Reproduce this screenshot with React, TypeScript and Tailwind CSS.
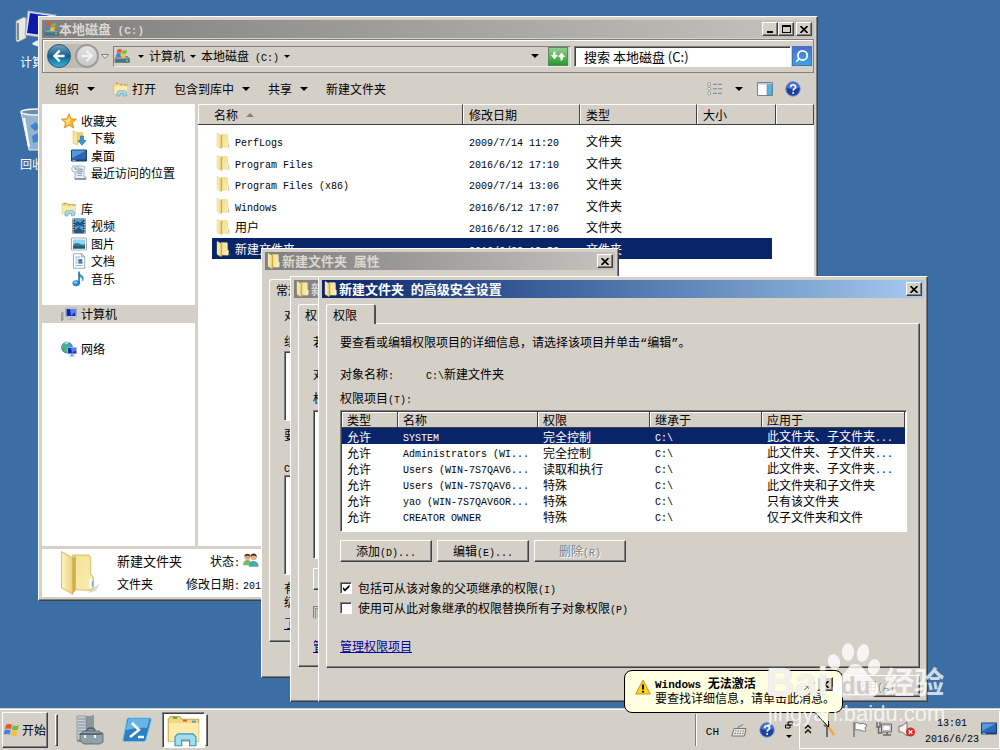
import React from 'react';
import { Search, ArrowLeft, ArrowRight } from 'lucide-react';

const raised = 'border border-t-white border-l-white border-r-[#404040] border-b-[#404040] shadow-[inset_-1px_-1px_0_#808080]';
const sunken = 'border border-t-[#808080] border-l-[#808080] border-r-white border-b-white shadow-[inset_1px_1px_0_#404040]';

// Latin runs are set in a half-width face, two steps smaller than the Chinese text
const Txt: React.FC<{ s: string; big?: boolean }> = ({ s, big }) => (
  <span className="whitespace-pre">
    {s.split(/([\x20-\x7e]+)/).map((part, i) =>
      i % 2 ? (
        <span key={i} className={`leading-none font-['Liberation_Mono','Noto_Sans_CJK_SC',monospace] ${big ? 'text-[11px]' : 'text-[10px]'}`}>
          {part}
        </span>
      ) : (
        part
      )
    )}
  </span>
);

const Caret = () => (
  <svg viewBox="0 0 8 4" className="w-2 h-1 shrink-0">
    <path d="M0 0h8L4 4z" fill="#000" />
  </svg>
);

const SmallCaret = () => (
  <svg viewBox="0 0 6 3" className="w-1.5 h-[3px] shrink-0">
    <path d="M0 0h6L3 3z" fill="#000" />
  </svg>
);

const Folder: React.FC<{ className?: string }> = ({ className = 'w-4 h-4' }) => (
  <svg viewBox="0 0 16 16" preserveAspectRatio="none" className={`${className} shrink-0`}>
    <defs>
      <linearGradient id="fold" x1="0" x2="1">
        <stop offset="0" stopColor="#fdf6c4" />
        <stop offset="1" stopColor="#ecd27a" />
      </linearGradient>
      <linearGradient id="foldBack" x1="0" x2="1" y2="1">
        <stop offset="0" stopColor="#f4e193" />
        <stop offset="1" stopColor="#f9edb4" />
      </linearGradient>
    </defs>
    <path d="m13 14 3-2.500-1.500 3-3 .8z" fill="#8a8a80" fillOpacity=".3" />
    <path d="M6 1.500h6l.6 1v6l1 1v4l-1.200.8L6 14z" fill="url(#foldBack)" stroke="#dcc370" strokeWidth=".4" />
    <path d="M2 .3 6 2.500V15.700L2 13.300z" fill="url(#fold)" stroke="#dcc370" strokeWidth=".4" />
    <path d="M6 2.500 7.200 1.700v12.500L6 15.700z" fill="#d0ad4c" />
    <path d="M12.500 10v3.300" stroke="#fff" strokeWidth=".8" />
    <path d="M13.300 11v2" stroke="#79a6bd" strokeWidth=".5" />
  </svg>
);

const LibraryFolder: React.FC<{ className?: string }> = ({ className = 'w-4 h-4' }) => (
  <svg viewBox="0 0 16 16" className={`${className} shrink-0`}>
    <path d="M1 3.200 2 2h4l1 1.200h7.500V13H1z" fill="#f2d980" stroke="#c9a94f" strokeWidth=".5" />
    <path d="M1.300 5h13.200v8H1.300z" fill="#fbecab" />
    <path d="M3 2.600h2" stroke="#4ca55e" strokeWidth=".8" />
    <path d="M7.500 3.800h1.800" stroke="#d4573c" strokeWidth=".8" />
    <path d="M11.500 4.300h1.800" stroke="#4a8fd0" strokeWidth=".8" />
    <path d="M4 15V11l1.300-1.300h6.700l1.300 1.300v4h-2.800v-2.500H7V15z" fill="#a4dcef" stroke="#3c93b8" strokeWidth=".5" />
  </svg>
);

const Flag = () => (
  <g>
    <path d="M1.500 1.600C3 .6 4.500.8 6 1.600L5.200 5C3.800 4.200 2.200 4.200.7 5z" fill="#e4552b" />
    <path d="M6.700 1.900c1.500.8 3 .8 4.500 0l-.9 3.400c-1.500.8-3 .8-4.400 0z" fill="#7db83a" />
    <path d="M.5 5.700c1.500-.9 3-.8 4.500 0l-.8 3.400c-1.500-.8-3-.8-4.500 0z" fill="#3f86d8" />
    <path d="M5.700 6c1.500.8 3 .8 4.500 0l-.9 3.400c-1.500.8-3 .8-4.400 0z" fill="#f6c02c" />
  </g>
);

const DriveIcon = () => (
  <svg viewBox="0 0 16 16" className="w-4 h-4 shrink-0">
    <path d="M1 10.500 3 8.500h10l2.500 2v4H1z" fill="#7e9aa5" stroke="#44606c" strokeWidth=".6" />
    <path d="M1.500 11.300H15v2.600H1.500z" fill="#3f7386" />
    <path d="M12 12.600h2" stroke="#65e06a" strokeWidth="1.200" />
    <g transform="translate(2 0)">
      <Flag />
    </g>
  </svg>
);

const StarIcon = () => (
  <svg viewBox="0 0 16 16" className="w-4 h-4 shrink-0">
    <path d="m8 .8 2.200 4.900 5.300.5-4 3.500 1.200 5.300L8 12.200 3.300 15l1.200-5.300-4-3.500 5.300-.5z" fill="#fbb52c" stroke="#c97d12" strokeWidth=".7" />
    <path d="m8 3 1.300 3.500L8 11l-3 1.500.8-3L3 7.200l3.400-.5z" fill="#ffe07c" />
  </svg>
);

const DownloadIcon = () => (
  <svg viewBox="0 0 16 16" className="w-4 h-4 shrink-0">
    <path d="M6 2h6v9l-6 3z" fill="#ecd275" />
    <path d="M2 .6 6.600 2.800V15L2 13.400z" fill="#f7e59a" stroke="#d9bb5a" strokeWidth=".5" />
    <path d="M9.500 6h3v4.500H15l-4 4.800-4-4.800h2.500z" fill="#3796dd" stroke="#1c65a8" strokeWidth=".6" />
  </svg>
);

const DesktopIcon = () => (
  <svg viewBox="0 0 16 14" className="w-4 h-3.5 shrink-0">
    <path d="M.5 1h15v11H.5z" fill="#2a66b4" stroke="#15406f" />
    <path d="M1 1.500h14L1 9z" fill="#5599df" />
    <path d="M1 10.500h14V12H1z" fill="#153e73" />
    <path d="M1.500 11.300h3" stroke="#9fd2f5" />
  </svg>
);

const RecentIcon = () => (
  <svg viewBox="0 0 16 16" className="w-4 h-4 shrink-0">
    <path d="M5 1h8l1 1.500-1 2V12h2v2.500H4L3 13l1-1.500z" fill="#e6edf2" stroke="#8d9daa" strokeWidth=".7" />
    <path d="M6.500 4h4.500v3H6.500zM6.500 8.500H11M6.500 10.500H11" fill="#b9cfdf" stroke="#7590a5" strokeWidth=".7" />
    <path d="M4 13.800h11" stroke="#60707c" />
    <circle cx="4" cy="4" r="3.300" fill="#f3f6f8" stroke="#8a96a0" strokeWidth=".7" />
    <path d="M4 2v2.200h2" fill="none" stroke="#566470" strokeWidth=".8" />
  </svg>
);

const VideoIcon = () => (
  <svg viewBox="0 0 16 16" className="w-4 h-4 shrink-0">
    <path d="M1.500.5h13v15h-13z" fill="#34434e" />
    <path d="M4 1h8v6.500H4zM4 8.300h8V15H4z" fill="#4ba5e0" />
    <path d="M4 5 7 3l2 2 3-3v5.500H4zM4 12l4-3 4 4v2H4z" fill="#1e568b" />
    <path d="M2.700 1v14M13.300 1v14" stroke="#dde6ec" strokeWidth="1.200" strokeDasharray="1.200 1.300" />
  </svg>
);

const PictureIcon = () => (
  <svg viewBox="0 0 16 14" className="w-4 h-3.5 shrink-0">
    <path d="M.5 1h15v12H.5z" fill="#fff" stroke="#8a9aa6" strokeWidth=".8" />
    <path d="M2 2.500h12v9H2z" fill="#96d3ee" />
    <path d="M2 8c3-3 5-2 7-1s3 1 5 0v4.500H2z" fill="#2f7f8d" />
    <path d="M2 9.500c4-1 8 0 12 0v2H2z" fill="#205a80" />
  </svg>
);

const DocIcon = () => (
  <svg viewBox="0 0 16 16" className="w-4 h-4 shrink-0">
    <path d="M2.500.8h8L13.700 4v11.300H2.500z" fill="#fbfcfd" stroke="#8a98a3" strokeWidth=".8" />
    <path d="M10.300.8V4h3.400z" fill="#ccd7df" stroke="#8a98a3" strokeWidth=".6" />
    <path d="M4.500 4H9M4.500 6h2M4.500 8h2M4.500 10h2M4.500 12.500h7M12 10h-1" stroke="#7797b1" strokeWidth=".8" />
    <path d="M7.300 6h4v4.700h-4z" fill="#3a86bd" />
  </svg>
);

const MusicIcon = () => (
  <svg viewBox="0 0 16 16" className="w-4 h-4 shrink-0">
    <path d="M7.300.5c.7 3 5.700 3.200 5.400 7.200-.1 1.200-.8 2.300-1.700 2.900.7-2.200-.4-3.700-2.200-4.300V12z" fill="#3c9fe0" />
    <ellipse cx="5.200" cy="12.200" rx="3.700" ry="3" fill="#2387d0" />
    <ellipse cx="4.500" cy="11.500" rx="1.800" ry="1.200" fill="#86cbf4" />
    <path d="M7.300.5h1.400V12H7.300z" fill="#1b6bab" />
  </svg>
);

const ComputerIcon = () => (
  <svg viewBox="0 0 16 16" className="w-4 h-4 shrink-0">
    <path d="M.5 7 2 6v8l-1.500.8z" fill="#b8bbbe" stroke="#6c7278" strokeWidth=".5" />
    <path d="M.8 13h1" stroke="#3ab03a" />
    <path d="M4.500 2h11v9h-11z" fill="#cfd6e2" stroke="#8390a5" strokeWidth=".5" />
    <path d="M5.500 3h9v7h-9z" fill="#1720b0" />
    <path d="M9 3h5.500v3L10 10z" fill="#5a7df0" />
    <path d="M9 11h2.500v2H14v1H6.500v-1H9z" fill="#aeb6c2" />
  </svg>
);

const NetworkIcon = () => (
  <svg viewBox="0 0 16 16" className="w-4 h-4 shrink-0">
    <circle cx="6" cy="6.500" r="5.500" fill="#3a9fd6" stroke="#1f6791" strokeWidth=".5" />
    <path d="M2 3.500c2-2 4-1.500 5-.5L5 6 2 7.500 1 6zM7 8l-1 3-3-1 1-3z" fill="#58b95a" />
    <path d="M3 2c2-1 3.500-1 5-.5L6 3z" fill="#d7f1fb" />
    <path d="M6.500 6.500h9v6.300h-9z" fill="#1a2ab8" stroke="#b8c2d6" strokeWidth=".8" />
    <path d="M10 7h5v2.500L11 12z" fill="#557cf0" />
    <path d="M10 13h2v1.500h1.500v1h-5v-1H10z" fill="#8e99ab" />
  </svg>
);

const HelpIcon = () => (
  <svg viewBox="0 0 16 16" className="w-4 h-4 shrink-0">
    <circle cx="8" cy="8" r="7.300" fill="#1f3f9f" stroke="#8ba1cf" strokeWidth="1" />
    <path d="M2 6.500a6 6 0 0 1 12 0c-3 2-9 2-12 0z" fill="#4a72cc" />
    <path d="M5.600 6.300c0-3.400 5-3.200 5-.4 0 1.900-2.400 1.800-2.400 3.900" fill="none" stroke="#fff" strokeWidth="1.600" />
    <circle cx="8.200" cy="12" r="1" fill="#fff" />
  </svg>
);

const UsersIcon = () => (
  <svg viewBox="0 0 18 16" className="w-4 h-4 shrink-0">
    <circle cx="5" cy="4.500" r="3.300" fill="#dba57a" />
    <path d="M1.500 4c0-4 7-4 7 0C6 2.800 4 3 1.500 4z" fill="#5b3b20" />
    <path d="M0 14c0-8 10-8 10 0z" fill="#79b968" />
    <circle cx="12" cy="4.800" r="3.500" fill="#e3b38c" />
    <path d="M8.500 4.500c0-5 7-5 7 0-2-2-5-2-7 0z" fill="#3b2d26" />
    <path d="M6.500 15.500c0-8.500 11-8.500 11 0z" fill="#46a8a8" />
  </svg>
);

const CloseGlyph = () => (
  <svg viewBox="0 0 8 7" className="w-2 h-[7px]">
    <path d="m.5 0 7 7M7.500 0l-7 7" stroke="#000" strokeWidth="1.600" />
  </svg>
);

const CaptionButton: React.FC<{ label: string; children: React.ReactNode }> = ({ label, children }) => (
  <button aria-label={label} className={`w-4 h-3.5 shrink-0 bg-[#d4d0c8] flex items-center justify-center ${raised}`}>
    {children}
  </button>
);

interface FrameProps {
  title: string;
  icon: React.ReactNode;
  place: string;
  active?: boolean;
  buttons?: React.ReactNode;
  children: React.ReactNode;
}

const WindowFrame: React.FC<FrameProps> = ({ title, icon, place, active, buttons, children }) => (
  <section className={`absolute overflow-hidden bg-[#d4d0c8] p-[3px] flex flex-col ${raised} ${place}`}>
    <header
      className={`h-[18px] shrink-0 flex items-center pl-px pr-0.5 font-bold text-[13px] leading-[18px] bg-gradient-to-r ${
        active ? 'from-[#0a246a] to-[#a6caf0] text-white' : 'from-[#808080] to-[#c4c3c0] text-[#dcd8d0]'
      }`}
    >
      {icon}
      <h2 className="flex-1 min-w-0">
        <Txt s={title} big />
      </h2>
      {buttons}
    </header>
    {children}
  </section>
);

const navItems = [
  { label: '收藏夹', icon: <StarIcon />, top: true },
  { label: '下载', icon: <DownloadIcon /> },
  { label: '桌面', icon: <DesktopIcon /> },
  { label: '最近访问的位置', icon: <RecentIcon /> },
  null,
  { label: '库', icon: <LibraryFolder />, top: true },
  { label: '视频', icon: <VideoIcon /> },
  { label: '图片', icon: <PictureIcon /> },
  { label: '文档', icon: <DocIcon /> },
  { label: '音乐', icon: <MusicIcon /> },
  null,
  { label: '计算机', icon: <ComputerIcon />, top: true, current: true },
  null,
  { label: '网络', icon: <NetworkIcon />, top: true },
];

const files = [
  ['PerfLogs', '2009/7/14 11:20'],
  ['Program Files', '2016/6/12 17:10'],
  ['Program Files (x86)', '2009/7/14 13:06'],
  ['Windows', '2016/6/12 17:07'],
  ['用户', '2016/6/12 17:06'],
  ['新建文件夹', '2016/6/23 12:53'],
];

const th = 'h-[21px] p-0 text-left font-normal border-t border-t-white border-b border-b-[#404040] border-r border-r-[#404040] shadow-[inset_1px_0_0_#fff]';

const Explorer = () => (
  <WindowFrame
    title="本地磁盘 (C:)"
    icon={<DriveIcon />}
    place="left-[38px] top-4 w-[780px] h-[585px]"
    buttons={
      <div className="flex">
        <CaptionButton label="最小化">
          <span className="w-1.5 h-0.5 mt-1.5 bg-black" />
        </CaptionButton>
        <CaptionButton label="最大化">
          <span className="w-[9px] h-2 border border-t-2 border-black" />
        </CaptionButton>
        <div className="w-0.5" />
        <CaptionButton label="关闭">
          <CloseGlyph />
        </CaptionButton>
      </div>
    }
  >
    <div className="h-[34px] shrink-0 mt-px flex items-center border border-[#808080] shadow-[inset_1px_1px_0_#fff] pl-1">
      <div className="flex items-center gap-1 rounded-full bg-[#bdbbb6]">
        <button aria-label="后退" className="w-6 h-6 rounded-full bg-gradient-to-b from-[#6f9fc0] via-[#12618f] to-[#35b4dd] border border-[#39566b] flex items-center justify-center">
          <ArrowLeft className="w-4 h-4 text-white" strokeWidth={3.5} />
        </button>
        <button aria-label="前进" className="w-6 h-6 rounded-full bg-gradient-to-b from-[#e2e2e2] to-[#c6c7c8] border-2 border-[#9c9c9c] flex items-center justify-center">
          <ArrowRight className="w-4 h-4 text-[#f4f4f4]" strokeWidth={3} />
        </button>
      </div>
      <svg viewBox="0 0 8 5" className="w-2 h-[5px] ml-0.5">
        <path d="M.5.5h7L4 4.500z" fill="#eee" stroke="#808080" />
      </svg>
      <div className="flex-1 h-[21px] ml-1 flex items-center border border-t-[#808080] border-l-[#808080] border-r-[#eee] border-b-[#eee]">
        <DriveIcon />
        <div className="ml-2 flex items-center gap-[5px]">
          <SmallCaret />
          <span>计算机</span>
          <SmallCaret />
          <Txt s="本地磁盘 (C:)" />
          <SmallCaret />
        </div>
        <div className="ml-auto mr-[9px]">
          <Caret />
        </div>
        <button aria-label="刷新" className="w-5 h-[19px] mr-0.5 bg-gradient-to-b from-[#8fd08c] to-[#1d9a2c] border border-[#5c8a5c] flex items-center justify-center">
          <svg viewBox="0 0 16 12" className="w-4 h-3">
            <path d="M5 1C3 2 2.800 4 3 5H.8l3.700 4.500L8 5H5.800C5.500 3.500 5.500 2 5 1zM11 11c2-1 2.200-3 2-4h2.200l-3.700-4.500L8 7h2.200c.3 1.500.3 3 .8 4z" fill="#fff" />
          </svg>
        </button>
      </div>
      <input
        aria-label="搜索"
        defaultValue="搜索 本地磁盘 (C:)"
        className={`w-[217px] h-[21px] ml-[3px] pl-[9px] bg-white text-[13px] leading-4 outline-none ${sunken}`}
      />
      <button aria-label="开始搜索" className="w-5 h-5 mx-px bg-gradient-to-b from-[#4a6fd0] to-[#35a6e6] border border-[#4a6fae] flex items-center justify-center">
        <Search className="w-3.5 h-3.5 text-white -scale-x-100" strokeWidth={3} />
      </button>
    </div>

    <div className="h-[31px] shrink-0 flex items-center gap-[18px] pl-[13px] pr-[13px]">
      <button className="flex items-center gap-2">组织<Caret /></button>
      <button className="flex items-center gap-[3px]"><LibraryFolder />打开</button>
      <button className="flex items-center gap-2">包含到库中<Caret /></button>
      <button className="flex items-center gap-2">共享<Caret /></button>
      <button>新建文件夹</button>
      <div className="ml-auto flex items-center gap-3">
        <button aria-label="更改视图" className="flex items-center gap-3">
          <svg viewBox="0 0 16 14" className="w-4 h-3.5">
            <path d="M1 1h2.500v2.500H1zM1 5.500h2.500V8H1zM1 10h2.500v2.500H1z" fill="#fff" stroke="#7b8794" strokeWidth=".7" />
            <path d="M6 2.300h10M6 6.800h10M6 11.300h10" stroke="#6d7f92" strokeDasharray="4 1" />
          </svg>
          <Caret />
        </button>
        <button aria-label="预览窗格" className="ml-0.5">
          <svg viewBox="0 0 16 14" className="w-4 h-3.5">
            <path d="M.5.5h15v13H.5z" fill="#fff" stroke="#6d8496" />
            <path d="M1 1h14v1.500H1z" fill="#b9c8d3" />
            <path d="M10 2.500h5V13h-5z" fill="#53b7dd" stroke="#6d8496" strokeWidth=".6" />
          </svg>
        </button>
        <button aria-label="帮助"><HelpIcon /></button>
      </div>
    </div>

    <div className="flex-1 min-h-0 flex gap-[3px]">
      <nav className="w-[153px] shrink-0 bg-white pt-2">
        <ul className="grid auto-rows-fr h-[246px]">
          {navItems.map((item, i) =>
            item ? (
              <li key={i} className={`flex items-center ${item.current ? 'bg-[#d4d0c8]' : ''}`}>
                <a href="#" className={`flex items-center gap-1 leading-4 ${item.top ? 'pl-[19px]' : 'pl-[29px]'}`}>
                  {item.icon}
                  {item.label}
                </a>
              </li>
            ) : (
              <li key={i} />
            )
          )}
        </ul>
      </nav>

      <div className="flex-1 min-w-0 bg-white">
        <table className="w-full table-fixed border-separate border-spacing-0">
          <colgroup>
            <col className="w-[14px]" />
            <col className="w-[251px]" />
            <col className="w-[117px]" />
            <col className="w-[117px]" />
            <col className="w-[75px]" />
            <col className="w-1" />
            <col />
          </colgroup>
          <thead className="bg-[#d4d0c8]">
            <tr>
              <th colSpan={2} className={th}>
                <div className="flex items-center gap-2 pl-4">
                  名称
                  <svg viewBox="0 0 8 4" className="w-2 h-1">
                    <path d="M0 4h8L4 0z" fill="#808080" />
                  </svg>
                </div>
              </th>
              <th className={`${th} pl-1.5`}>修改日期</th>
              <th className={`${th} pl-1.5`}>类型</th>
              <th colSpan={2} className={`${th} pl-1.5`}>大小</th>
              <th className={th} aria-label="其他" />
            </tr>
          </thead>
          <tbody>
            <tr className="h-[5px]">
              <td colSpan={7} className="p-0" />
            </tr>
            {files.map(([name, date], i) => {
              const cell = `p-0 leading-4 ${i === 5 ? 'bg-[#0a246a] text-white' : ''}`;
              return (
                <tr key={name} className="h-[21px] even:h-[22px]">
                  <td className="p-0" />
                  <td className={cell}>
                    <div className="flex items-center gap-1 pl-[3px]">
                      <Folder />
                      <Txt s={name} />
                    </div>
                  </td>
                  <td className={`${cell} pl-1.5`}><Txt s={date} /></td>
                  <td className={`${cell} pl-1.5`}>文件夹</td>
                  <td className={cell} />
                  <td className="p-0" />
                  <td className="p-0" />
                </tr>
              );
            })}
          </tbody>
        </table>
      </div>
    </div>

    <footer className="h-[48px] shrink-0 mt-[3px] bg-white flex pl-[14px]">
      <Folder className="w-11 h-11 mt-0.5" />
      <dl className="ml-[17px] grid grid-cols-[66px_54px_auto] gap-x-[3px] grid-rows-2 content-start leading-[18px] pt-[3px]">
        <dt className="text-[13px] whitespace-nowrap">新建文件夹</dt>
        <dd className="text-right"><Txt s="状态:" /></dd>
        <dd><UsersIcon /></dd>
        <dt>文件夹</dt>
        <dd className="text-right"><Txt s="修改日期:" /></dd>
        <dd><Txt s="2016/6/23 12:53" /></dd>
      </dl>
    </footer>
  </WindowFrame>
);

const closeButton = (
  <CaptionButton label="关闭">
    <CloseGlyph />
  </CaptionButton>
);

const tab = 'h-5 -mb-px relative bg-[#d4d0c8] rounded-t-[3px] border-t border-l border-white border-r-2 border-r-[#505050] text-left';
const page = 'border border-t-white border-l-white border-r-[#404040] border-b-[#404040] shadow-[inset_-1px_-1px_0_#808080]';

const PropertiesWindow = () => (
  <WindowFrame title="新建文件夹 属性" icon={<Folder />} place="left-[261px] top-[248px] w-[358px] h-[430px]" buttons={closeButton}>
    <div className="flex-1 flex flex-col px-1 pt-1.5 pb-8">
      <div className="flex items-end">
        <button className={`${tab} w-12 pl-1.5`}>常规</button>
        <div className="w-12 ml-12 h-[22px] border-t border-white" />
      </div>
      <div className={`flex-1 ${page} pl-[14px] flex flex-col items-start`}>
        <p className="mt-2">对象</p>
        <p className="mt-2.5">组</p>
        <div className={`mt-0.5 w-40 h-[70px] bg-white ${sunken}`} />
        <p className="mt-1.5">要</p>
        <p className="mt-4"><Txt s="C" /></p>
        <div className={`w-40 h-[100px] bg-white ${sunken}`} />
        <p className="mt-1.5 leading-[14px]">有<br />级</p>
        <a href="#" className="mt-1.5 text-[#00009c] underline">了解</a>
      </div>
    </div>
  </WindowFrame>
);

const PermissionsWindow = () => (
  <WindowFrame title="新建" icon={<Folder />} place="left-[290px] top-[276px] w-[300px] h-[426px]">
    <div className="flex-1 flex flex-col px-1 pt-1.5 pb-[31px]">
      <div className="flex">
        <button className={`${tab} w-[50px] pl-1.5`}>权限</button>
      </div>
      <div className={`flex-1 ${page} pl-[14px] flex flex-col items-start`}>
        <p className="mt-[10px]">若要</p>
        <p className="mt-4">对象</p>
        <p className="mt-2">权限</p>
        <div className={`mt-1 w-40 h-[149px] bg-white ${sunken}`} />
        <button aria-label="添加" className={`mt-[9px] w-20 h-[22px] ${raised}`} />
        <div className="mt-4 h-3 w-20 text-[#808080] border-l border-t border-[#808080] leading-3">同</div>
        <a href="#" className="mt-5 text-[#00009c] underline">管理</a>
      </div>
    </div>
  </WindowFrame>
);

const entries = [
  ['SYSTEM', '完全控制', '此文件夹、子文件夹...'],
  ['Administrators (WI...', '完全控制', '此文件夹、子文件夹...'],
  ['Users (WIN-7S7QAV6...', '读取和执行', '此文件夹、子文件夹...'],
  ['Users (WIN-7S7QAV6...', '特殊', '此文件夹和子文件夹'],
  ['yao (WIN-7S7QAV6OR...', '特殊', '只有该文件夹'],
  ['CREATOR OWNER', '特殊', '仅子文件夹和文件'],
];

const columns = ['类型', '名称', '权限', '继承于', '应用于'];

const PushButton: React.FC<{ label: string; disabled?: boolean }> = ({ label, disabled }) => (
  <button
    disabled={disabled}
    className={`w-[92px] h-[22px] leading-4 bg-[#d4d0c8] ${raised} ${disabled ? 'text-[#808080] [text-shadow:1px_1px_0_#fff]' : ''}`}
  >
    <Txt s={label} />
  </button>
);

const Check: React.FC<{ id: string; label: string; checked?: boolean }> = ({ id, label, checked }) => (
  <div className="flex items-center gap-1.5 h-5">
    <div className="grid">
      <input
        id={id}
        type="checkbox"
        defaultChecked={checked}
        className={`peer col-start-1 row-start-1 appearance-none w-3 h-3 bg-white ${sunken}`}
      />
      <svg viewBox="0 0 12 12" className="col-start-1 row-start-1 w-3 h-3 pointer-events-none invisible peer-checked:visible">
        <path d="M3 5v2.500L5 9.500l4.500-4.500V2.500L5 7z" fill="#000" />
      </svg>
    </div>
    <label htmlFor={id}><Txt s={label} /></label>
  </div>
);

const AdvancedWindow = () => (
  <WindowFrame
    title="新建文件夹 的高级安全设置"
    icon={<Folder />}
    place="left-[318px] top-[276px] w-[610px] h-[426px]"
    active
    buttons={closeButton}
  >
    <div className="flex-1 flex flex-col px-1 pt-1.5">
      <div className="flex">
        <button className={`${tab} w-[50px] pl-1.5`}>权限</button>
      </div>
      <div className={`h-[345px] ${page} pl-[13px] pr-3`}>
        <p className="mt-[10px]">
          要查看或编辑权限项目的详细信息，请选择该项目并单击
          <span className="leading-none font-['Liberation_Mono',monospace]">“</span>编辑
          <span className="leading-none font-['Liberation_Mono',monospace]">”</span>。
        </p>
        <dl className="mt-4 flex">
          <dt className="w-[86px]"><Txt s="对象名称:" /></dt>
          <dd><Txt s="C:\新建文件夹" /></dd>
        </dl>
        <p className="mt-2"><Txt s="权限项目(T):" /></p>
        <div className={`mt-1 h-[122px] bg-white p-px ${sunken}`}>
          <table className="w-full h-[111px] table-fixed border-separate border-spacing-0 leading-[15px]">
            <colgroup>
              <col className="w-14" />
              <col className="w-[140px]" />
              <col className="w-28" />
              <col className="w-28" />
              <col />
            </colgroup>
            <thead className="bg-[#d4d0c8]">
              <tr>
                {columns.map((c) => (
                  <th key={c} className="p-0 pl-[5px] text-left font-normal border-b border-r border-[#404040] shadow-[inset_1px_1px_0_#fff]">{c}</th>
                ))}
              </tr>
            </thead>
            <tbody>
              {entries.map(([name, perm, scope], i) => (
                <tr key={i} className={i === 0 ? 'bg-[#0a246a] text-white' : ''}>
                  <td className="p-0 pl-[5px]">允许</td>
                  <td className="p-0 pl-[5px]"><Txt s={name} /></td>
                  <td className="p-0 pl-[5px]">{perm}</td>
                  <td className="p-0 pl-[5px]"><Txt s="C:\" /></td>
                  <td className="p-0 pl-[5px]"><Txt s={scope} /></td>
                </tr>
              ))}
            </tbody>
          </table>
        </div>
        <div className="mt-2 flex gap-[5px]">
          <PushButton label="添加(D)..." />
          <PushButton label="编辑(E)..." />
          <PushButton label="删除(R)" disabled />
        </div>
        <div className="mt-4">
          <Check id="inherit" label="包括可从该对象的父项继承的权限(I)" checked />
          <Check id="replace" label="使用可从此对象继承的权限替换所有子对象权限(P)" />
        </div>
        <a href="#" className="block w-fit mt-5 text-[#00009c] underline">管理权限项目</a>
      </div>
      <div className="mt-[7px] flex justify-end">
        <PushButton label="应用(A)" disabled />
      </div>
    </div>
  </WindowFrame>
);

const Balloon = () => (
  <div className="absolute left-[624px] top-[670px] w-[219px] h-[43px] rounded-lg border border-black bg-[#ffffe1] flex gap-1 pl-[10px] pt-[5px] leading-[13px]">
    <svg viewBox="0 0 16 16" className="w-4 h-4 mt-[3px] shrink-0">
      <path d="M8 1 15.300 15H.7z" fill="#fcd116" stroke="#c8901a" strokeWidth=".9" strokeLinejoin="round" />
      <path d="M8 5.500v5" stroke="#000" strokeWidth="1.800" />
      <circle cx="8" cy="12.700" r="1" fill="#000" />
    </svg>
    <div>
      <p className="font-bold"><Txt s="Windows 无法激活" big /></p>
      <p className="whitespace-nowrap">要查找详细信息，请单击此消息。</p>
    </div>
    <div className="absolute top-1.5 right-[9px] flex">
      <svg viewBox="0 0 14 14" className="w-3.5 h-3.5">
        <path d="m3 9 6-6 3 3-6 6zM1 13l4-3" fill="#b9b6a8" stroke="#696758" />
      </svg>
      <CaptionButton label="关闭提示"><CloseGlyph /></CaptionButton>
    </div>
    <svg viewBox="0 0 16 16" className="absolute left-[189px] top-[41px] w-4 h-4">
      <path d="M1 .5 14.500 15V.5" fill="#ffffe1" stroke="#000" />
      <path d="M1.500 0h12.500" stroke="#ffffe1" strokeWidth="1.500" />
    </svg>
  </div>
);

const Watermark = () => (
  <div className="absolute left-[766px] top-[640px] w-[182px] text-white/75 font-['Liberation_Sans','Noto_Sans_CJK_SC',sans-serif] pointer-events-none">
    <div className="flex items-end h-[60px]">
      <span className="text-[40px] leading-9 font-bold [text-shadow:0_0_1px_#c9c7bd]">Bai</span>
      <svg viewBox="0 0 56 60" className="w-14 h-[60px] shrink-0">
        <g fill="#fff" fillOpacity=".78">
          <ellipse cx="6" cy="22" rx="6" ry="8" transform="rotate(-15 6 22)" />
          <ellipse cx="20" cy="12" rx="6" ry="9" />
          <ellipse cx="35" cy="13" rx="6" ry="9" transform="rotate(12 35 13)" />
          <ellipse cx="46" cy="27" rx="6" ry="8" transform="rotate(15 46 27)" />
          <path d="M27 24c8 0 9 7 15 13s10 9 8 15c-3 8-12 5-22 5S9 60 5 52c-2-6 2-10 8-15s7-13 14-13z" />
        </g>
        <text x="13" y="54" fontSize="24" fontWeight="bold" fill="#cfccc5">du</text>
      </svg>
      <span className="text-[30px] leading-[34px] font-bold">经验</span>
    </div>
    <p className="text-[22px] leading-7 pl-0.5 whitespace-nowrap">jingyan.baidu.com</p>
  </div>
);

const Taskbar = () => (
  <footer className="relative h-[42px] shrink-0 bg-[#d4d0c8] border-t border-[#d4d0c8] shadow-[inset_0_1px_0_#fff] flex items-center pl-0.5">
    <button className={`w-[46px] h-9 bg-[#d4d0c8] flex items-center justify-center gap-0.5 ${raised}`}>
      <svg viewBox="0 0 12 11" className="w-4 h-4 shrink-0"><Flag /></svg>
      开始
    </button>
    <div className={`w-[3px] h-8 ml-[7px] ${raised}`} />
    <button aria-label="服务器管理器" className="ml-[18px]">
      <svg viewBox="0 0 28 32" className="w-7 h-8">
        <path d="M1 2h13l4-1v25l-4 2H1z" fill="#8b969d" />
        <path d="M1 2h9v24H1z" fill="#c9d1d6" stroke="#6b777e" strokeWidth=".6" />
        <path d="M2 5h7M2 8h7M2 11h7M2 14h7M2 17h7M2 20h7" stroke="#7a878f" />
        <path d="M4 20 8 17h15l4 3v8l-3 2H8l-4-3z" fill="#8fa1ab" stroke="#46545d" strokeWidth=".7" />
        <path d="M4 20h20l3-1M11 17c0-4 8-4 8 0" fill="none" stroke="#4b5a63" strokeWidth="1.300" />
        <path d="M9 21v3M19 21v3" stroke="#e8edf0" strokeWidth="2" />
      </svg>
    </button>
    <button aria-label="PowerShell" className="ml-[18px]">
      <svg viewBox="0 0 30 26" className="w-[30px] h-[26px]">
        <path d="M6.500 1h21c1.500 0 2 1 1.700 2.500L24 22.500c-.4 1.500-1.300 2-2.700 2H2.500C1 24.500.7 23.500 1 22L4.800 3C5 1.600 5.500 1 6.500 1z" fill="#2d7fc1" stroke="#7fc4ea" />
        <path d="M6.500 2h21L25 11C17 10 11 12 3.500 13z" fill="#69b5e6" />
        <path d="m10 6 7 7-9 7M16 20h6" fill="none" stroke="#fff" strokeWidth="2.500" />
      </svg>
    </button>
    <button aria-label="资源管理器" className={`ml-2.5 w-[43px] h-9 bg-white flex items-center justify-center ${sunken}`}>
      <LibraryFolder className="w-9 h-9" />
    </button>
    <div className={`w-[3px] h-8 ${raised}`} />

    <div className="ml-auto flex items-center h-full">
      <div className="w-0.5 h-8 border-l border-[#808080] bg-white" />
      <span className="ml-[9px]"><Txt s="CH" big /></span>
      <svg viewBox="0 0 16 14" className="w-4 h-3.5 ml-3">
        <path d="M3 5.500h12L13.500 13H.8z" fill="#e8e6e0" stroke="#77756e" />
        <path d="M4 8h10M3.500 10.500h9.500" stroke="#77756e" strokeDasharray="1.500 1" />
        <path d="M7 5c0-3 4-1 5-4" fill="none" stroke="#77756e" />
      </svg>
      <div className="ml-3"><HelpIcon /></div>
      <div className="ml-2.5 flex flex-col items-center gap-1.5">
        <svg viewBox="0 0 8 8" className="w-2 h-2">
          <path d="M3 1h4.500v3H3zM.5 4H5v3H.5z" fill="#d4d0c8" stroke="#000" />
        </svg>
        <SmallCaret />
      </div>
      <div className="ml-1.5 h-[38px] flex items-center border-l border-b border-r border-white pl-1 pr-0.5">
        <svg viewBox="0 0 8 10" className="w-2 h-2.5">
          <path d="M1 4.500 4 1.500l3 3M1 9l3-3 3 3" fill="none" stroke="#000" strokeWidth="1.300" />
        </svg>
        <svg viewBox="0 0 16 18" className="w-4 h-[18px] ml-2.5">
          <path d="m3 2 9 13" stroke="#f3a82a" strokeWidth="2.500" />
          <path d="M2 5c2 2 4 1 5-1M5 6v11" fill="none" stroke="#61707a" strokeWidth="2" />
        </svg>
        <svg viewBox="0 0 16 16" className="w-4 h-4 ml-3.5">
          <path d="M2 1v15" stroke="#777" strokeWidth="1.500" />
          <path d="M3 2c3-1 4 1 6 1l1-1 5 2-2 3 1 3c-4 1-5-2-11-1z" fill="#fff" stroke="#777" />
        </svg>
        <svg viewBox="0 0 16 16" className="w-4 h-4 ml-2">
          <path d="M1 1v5h3V1M2.500 6v6h4" fill="none" stroke="#666" strokeWidth="1.400" />
          <path d="M5.500 3h10v8h-10z" fill="#d5dade" stroke="#666" />
          <path d="M7 4.500h7v5H7z" fill="#fff" stroke="#888" strokeWidth=".5" />
          <path d="M7 14h8M11 11v3" stroke="#666" strokeWidth="1.500" />
        </svg>
        <svg viewBox="0 0 18 16" className="w-[18px] h-4 ml-1.5">
          <path d="M1 5h3l5-4v14l-5-4H1z" fill="#f4f4f4" stroke="#777" />
          <circle cx="12.500" cy="11" r="4.500" fill="#d62a22" />
          <path d="m10.700 9.200 3.600 3.600m0-3.600-3.600 3.600" stroke="#fff" strokeWidth="1.300" />
        </svg>
        <div className="ml-[9px] w-[54px] text-center leading-4">
          <p><Txt s="13:01" /></p>
          <p><Txt s="2016/6/23" /></p>
        </div>
        <div className="ml-0.5"><DesktopIcon /></div>
      </div>
    </div>
  </footer>
);

export default function App() {
  return (
    <div className="h-screen overflow-hidden relative flex flex-col bg-[#3a6ea5] text-black text-[12px] leading-4 font-['Noto_Sans_CJK_SC',sans-serif]">
      <main className="flex-1 min-h-0">
        <div className="pt-2 pl-3.5 w-14 flex flex-col text-white">
          <svg viewBox="0 0 44 44" className="w-11 h-11">
            <path d="M2 13 10 9l2 1v20L4 34l-2-1z" fill="#e6e8ea" stroke="#8b9299" strokeWidth=".8" />
            <path d="M4 15v17" stroke="#62686e" strokeWidth="1.500" />
            <path d="M3 30h2" stroke="#3ecb3e" strokeWidth="2" />
            <path d="m14 3 28 4v24L11 27z" fill="#dfe5ee" stroke="#9aa6b8" />
            <path d="m16 5 26 4v20L13 25z" fill="#1018a8" />
            <path d="m22 6 20 3v20z" fill="#3346d8" />
            <path d="M18 36c2-4 10-5 18-4v6c-6 2-14 1-18-2z" fill="#e9edf1" />
          </svg>
          <span className="pl-1.5 mt-0.5 whitespace-nowrap">计算机</span>
          <svg viewBox="0 0 40 44" className="w-10 h-11 mt-[38px] ml-1.5">
            <path d="M1 4h36l-5 38H9z" fill="#b9cfe2" fillOpacity=".7" stroke="#e8f0f6" />
            <ellipse cx="19" cy="4" rx="18" ry="3" fill="#6d8da8" stroke="#f1f6fa" strokeWidth="1.500" />
            <path d="m10 18 6-4 4 6-5 3zM12 28l8-4v9l-7 2z" fill="#3d83d1" />
            <path d="M4 10l5 29" stroke="#fff" strokeWidth="2" />
          </svg>
          <span className="pl-1.5 mt-1 whitespace-nowrap">回收站</span>
        </div>
        <Explorer />
        <PropertiesWindow />
        <PermissionsWindow />
        <AdvancedWindow />
      </main>
      <Taskbar />
      <Balloon />
      <Watermark />
    </div>
  );
}
